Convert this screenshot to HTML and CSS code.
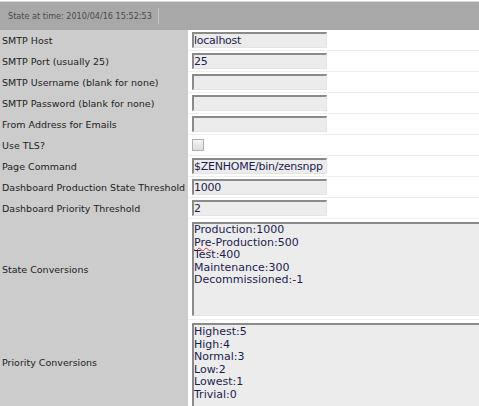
FILE: index.html
```html
<!DOCTYPE html>
<html>
<head>
<meta charset="utf-8">
<link rel="stylesheet" href="styles.css">
</head>
<body>
<div class="header"><span class="stamp">State at time: 2010/04/16 15:52:53</span></div>
<table class="form">
<tr><td class="lbl">SMTP Host</td><td class="val"><input class="txt" value="localhost"></td></tr>
<tr><td class="lbl">SMTP Port (usually 25)</td><td class="val"><input class="txt" value="25"></td></tr>
<tr><td class="lbl">SMTP Username (blank for none)</td><td class="val"><input class="txt" value=""></td></tr>
<tr><td class="lbl">SMTP Password (blank for none)</td><td class="val"><input class="txt" value=""></td></tr>
<tr><td class="lbl">From Address for Emails</td><td class="val"><input class="txt" value=""></td></tr>
<tr><td class="lbl">Use TLS?</td><td class="val"><span class="chk"></span></td></tr>
<tr><td class="lbl">Page Command</td><td class="val"><input class="txt" value="$ZENHOME/bin/zensnpp"></td></tr>
<tr><td class="lbl">Dashboard Production State Threshold</td><td class="val"><input class="txt" value="1000"></td></tr>
<tr><td class="lbl">Dashboard Priority Threshold</td><td class="val"><input class="txt" value="2"></td></tr>
<tr><td class="lbl">State Conversions</td><td class="val big"><div class="area state">Production:1000<br><span class="sp">Pre</span>-Production:500<br>Test:400<br>Maintenance:300<br>Decommissioned:-1</div></td></tr>
<tr class="last"><td class="lbl">Priority Conversions</td><td class="val big"><div class="area prio">Highest:5<br>High:4<br>Normal:3<br>Low:2<br>Lowest:1<br>Trivial:0</div></td></tr>
</table>
</body>
</html>
```
FILE: styles.css
```css
html, body {
  margin: 0;
  padding: 0;
  background: #fff;
  overflow: hidden;
}
body {
  font-family: "DejaVu Sans", Verdana, sans-serif;
  width: 479px;
  height: 406px;
}
.header {
  margin-top: 1px;
  border-top: 1px solid #d8d8d8;
  background: #a8a8a8;
  height: 28px;
  display: flex;
  align-items: center;
  padding-left: 8px;
}
.stamp {
  font-family: "DejaVu Sans Condensed", "DejaVu Sans", sans-serif;
  font-size: 9px;
  color: #4a4a4a;
  padding-right: 6px;
  border-right: 1px solid #c4c4c4;
  line-height: 16px;
}
.form {
  border-collapse: collapse;
  width: 100%;
  table-layout: fixed;
}
.form td {
  padding: 0;
}
.lbl {
  width: 186px;
  background: #cccccc;
  font-size: 9.5px;
  color: #222;
  padding-left: 2px !important;
  white-space: nowrap;
  border-bottom: 1px solid #cccccc;
}
.val {
  padding: 2px 0 2px 4px !important;
  border-bottom: 1px solid #efefef;
  white-space: nowrap;
}
.val.big {
  padding: 3px 0 3px 4px !important;
}
.last .val.big {
  padding-bottom: 0 !important;
  border-bottom: 0;
}
.txt {
  display: block;
  box-sizing: border-box;
  width: 135px;
  height: 16px;
  margin: 0;
  padding: 0;
  border: 0;
  border-top: 2px solid #8a8a8a;
  border-left: 2px solid #8a8a8a;
  border-right: 1px solid #e4e4e4;
  border-bottom: 1px solid #e4e4e4;
  background: #ececec;
  font-family: "DejaVu Sans", Verdana, sans-serif;
  font-size: 11px;
  letter-spacing: -0.25px;
  color: #1c1c50;
  outline: none;
}
.chk {
  display: block;
  width: 10px;
  height: 10px;
  margin: 2px 0 2px 0;
  border: 1px solid #b0b0b0;
  background: linear-gradient(#f4f4f4, #dcdcdc);
}
.area {
  box-sizing: border-box;
  width: 100%;
  border: 0;
  border-top: 2px solid #8a8a8a;
  border-left: 2px solid #8a8a8a;
  background: #ececec;
  font-size: 11px;
  line-height: 12.6px;
  color: #1c1c50;
  padding: 0 0 0 0;
  overflow: hidden;
}
.state {
  height: 94px;
  border-bottom: 1px solid #e4e4e4;
}
.prio {
  height: 83px;
  padding-top: 1px;
}
.sp {
  text-decoration: underline wavy #e03030;
  text-decoration-thickness: 1px;
  text-underline-offset: 1px;
}
```
